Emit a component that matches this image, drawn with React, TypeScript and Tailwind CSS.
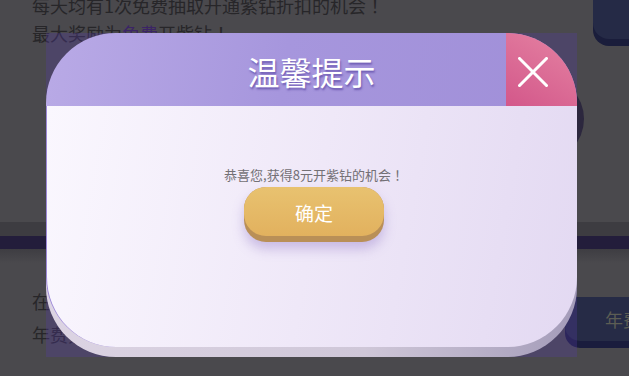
import React from "react";

const cjk = "font-['Noto_Sans_CJK_SC','Noto_Sans',sans-serif]";
const jp = "font-['Noto_Sans_CJK_JP',sans-serif]";

export default function App() {
  return (
    <div className={`relative h-[376px] w-[629px] overflow-hidden bg-[#4a494d] ${cjk}`}>
      {/* page content behind the overlay */}
      <div className="flex flex-col">
        <div className="flex h-[76px] justify-between">
          <div className="-mt-[9px] pl-[32px] text-[18px] leading-[28px] text-[#272629]">
            <p>
              每天均有1次免费抽取开通紫钻折扣的机会<span className={jp}>！</span>
            </p>
            <p>
              最大奖励为<span className="text-[#3b2466]">免费</span>开紫钻<span className={jp}>！</span>
            </p>
          </div>
          <div className="-mr-[30px] -mt-[20px] h-[66px] w-[66px] shrink-0 rounded-[16px] bg-[#1a1d3b] pb-[7px]">
            <div className="h-full rounded-[16px] bg-[#252a46]" />
          </div>
        </div>
        <div className="flex h-[86px] justify-end">
          <div className="mr-[45px] h-full w-[220px] rounded-full bg-[#2c273e]" />
        </div>
        <div className="h-[60px]" />
        <div className="h-[14px] bg-[#3d3c41]" />
        <div className="h-[13px] bg-[#231d3b]" />
        <div className="h-[14px] bg-gradient-to-b from-[#3e3d42] to-[#4a494d]" />
        <div className="flex justify-between">
          <div className="pl-[32px] pt-[22px] text-[18px] leading-[33px] text-[#272629]">
            <p>在活动期间开通紫钻</p>
            <p>年费紫钻享受更多优惠</p>
          </div>
          <div className="-mr-[30px] mt-[34px] h-[51px] w-[94px] shrink-0 rounded-[15px] bg-[#1a1c3d] pb-[7px]">
            <div className="flex h-full items-center overflow-hidden rounded-[15px] bg-[#262b46] pl-[40px] text-[18px] whitespace-nowrap text-[#5c5d54]">
              年费
            </div>
          </div>
        </div>
      </div>

      {/* dialog */}
      <div className="absolute left-[46px] top-[33px] flex h-[324px] w-[531px] flex-col bg-[rgba(87,60,164,0.3)]">
        <div className="grid h-[73px] grid-cols-[71px_1fr_71px] overflow-hidden rounded-t-[70px] bg-[linear-gradient(100deg,#b9aae6,#a696dd_45%,#a08fd8)]">
          <div />
          <div className="flex items-center justify-center pt-[3px] text-[32px] leading-none text-white [text-shadow:1px_2px_2px_rgba(95,75,168,0.8)]">
            温馨提示
          </div>
          <div className="flex items-center pl-[12px] pt-[5px] bg-[linear-gradient(30deg,#d3578a,#e584a3)]">
            <svg width="30" height="30" viewBox="0 0 30 30">
              <path d="M1.5 1.5 L28.5 28.5 M28.5 1.5 L1.5 28.5" stroke="white" strokeWidth="3" strokeLinecap="square" />
            </svg>
          </div>
        </div>
        <div className="rounded-b-[70px] bg-[linear-gradient(90deg,#dcd4e3,#cfc7d8_60%,#a49cb9)] pb-[10px]">
          <div className="flex h-[241px] flex-col items-center rounded-b-[70px] border-l border-[#9c88d8] bg-[linear-gradient(100deg,#faf7fe,#efe8f8_50%,#e3d9f2)] pl-[4px] pt-[60px]">
            <p className="text-[13px] leading-[18px] text-[#737075]">
              恭喜您,获得8元开紫钻的机会<span className={jp}>！</span>
            </p>
            <div className="mt-[3px] h-[55px] w-[140px] rounded-[22px] bg-[#b98f57] pb-[6px] shadow-[0_7px_12px_rgba(130,100,190,0.35)]">
              <div className="flex h-full items-center justify-center rounded-[22px] bg-gradient-to-b from-[#e8c270] to-[#e2b15e] pt-[4px] text-[19px] text-white">
                确定
              </div>
            </div>
          </div>
        </div>
      </div>
    </div>
  );
}
